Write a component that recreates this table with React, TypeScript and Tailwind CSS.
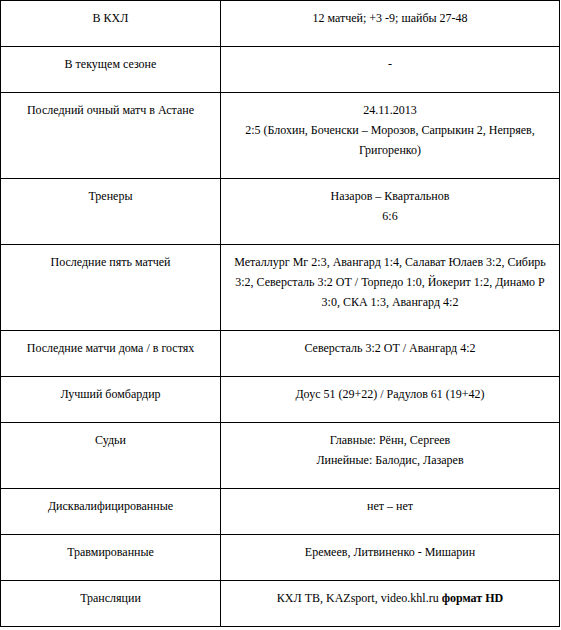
import React from "react";

type Row = { label: string; value: React.ReactNode[] };

const rows: Row[] = [
  { label: "В КХЛ", value: ["12 матчей; +3 -9; шайбы 27-48"] },
  { label: "В текущем сезоне", value: ["-"] },
  {
    label: "Последний очный матч в Астане",
    value: ["24.11.2013", "2:5 (Блохин, Боченски – Морозов, Сапрыкин 2, Непряев, Григоренко)"],
  },
  { label: "Тренеры", value: ["Назаров – Квартальнов", "6:6"] },
  {
    label: "Последние пять матчей",
    value: [
      "Металлург Мг 2:3, Авангард 1:4, Салават Юлаев 3:2, Сибирь 3:2, Северсталь 3:2 ОТ / Торпедо 1:0, Йокерит 1:2, Динамо Р 3:0, СКА 1:3, Авангард 4:2",
    ],
  },
  { label: "Последние матчи дома / в гостях", value: ["Северсталь 3:2 ОТ / Авангард 4:2"] },
  { label: "Лучший бомбардир", value: ["Доус 51 (29+22) / Радулов 61 (19+42)"] },
  { label: "Судьи", value: ["Главные: Рённ, Сергеев", "Линейные: Балодис, Лазарев"] },
  { label: "Дисквалифицированные", value: ["нет – нет"] },
  { label: "Травмированные", value: ["Еремеев, Литвиненко - Мишарин"] },
  {
    label: "Трансляции",
    value: [
      <>
        КХЛ ТВ, KAZsport, video.khl.ru <b>формат HD</b>
      </>,
    ],
  },
];

export default function App() {
  return (
    <div className="bg-white w-[561px] h-[630px] text-black text-[12px] leading-[20px] font-['Liberation_Serif','Times_New_Roman',serif]">
      <table className="w-[560px] border-collapse table-fixed">
        <colgroup>
          <col className="w-[220px]" />
          <col />
        </colgroup>
        <tbody>
          {rows.map((r) => (
            <tr key={r.label}>
              <td className="border border-black align-top text-center px-[10px] pt-[7px] pb-[18px]">{r.label}</td>
              <td className="border border-black align-top text-center px-[10px] pt-[7px] pb-[18px]">
                {r.value.map((v, i) => (
                  <div key={i}>{v}</div>
                ))}
              </td>
            </tr>
          ))}
        </tbody>
      </table>
    </div>
  );
}
